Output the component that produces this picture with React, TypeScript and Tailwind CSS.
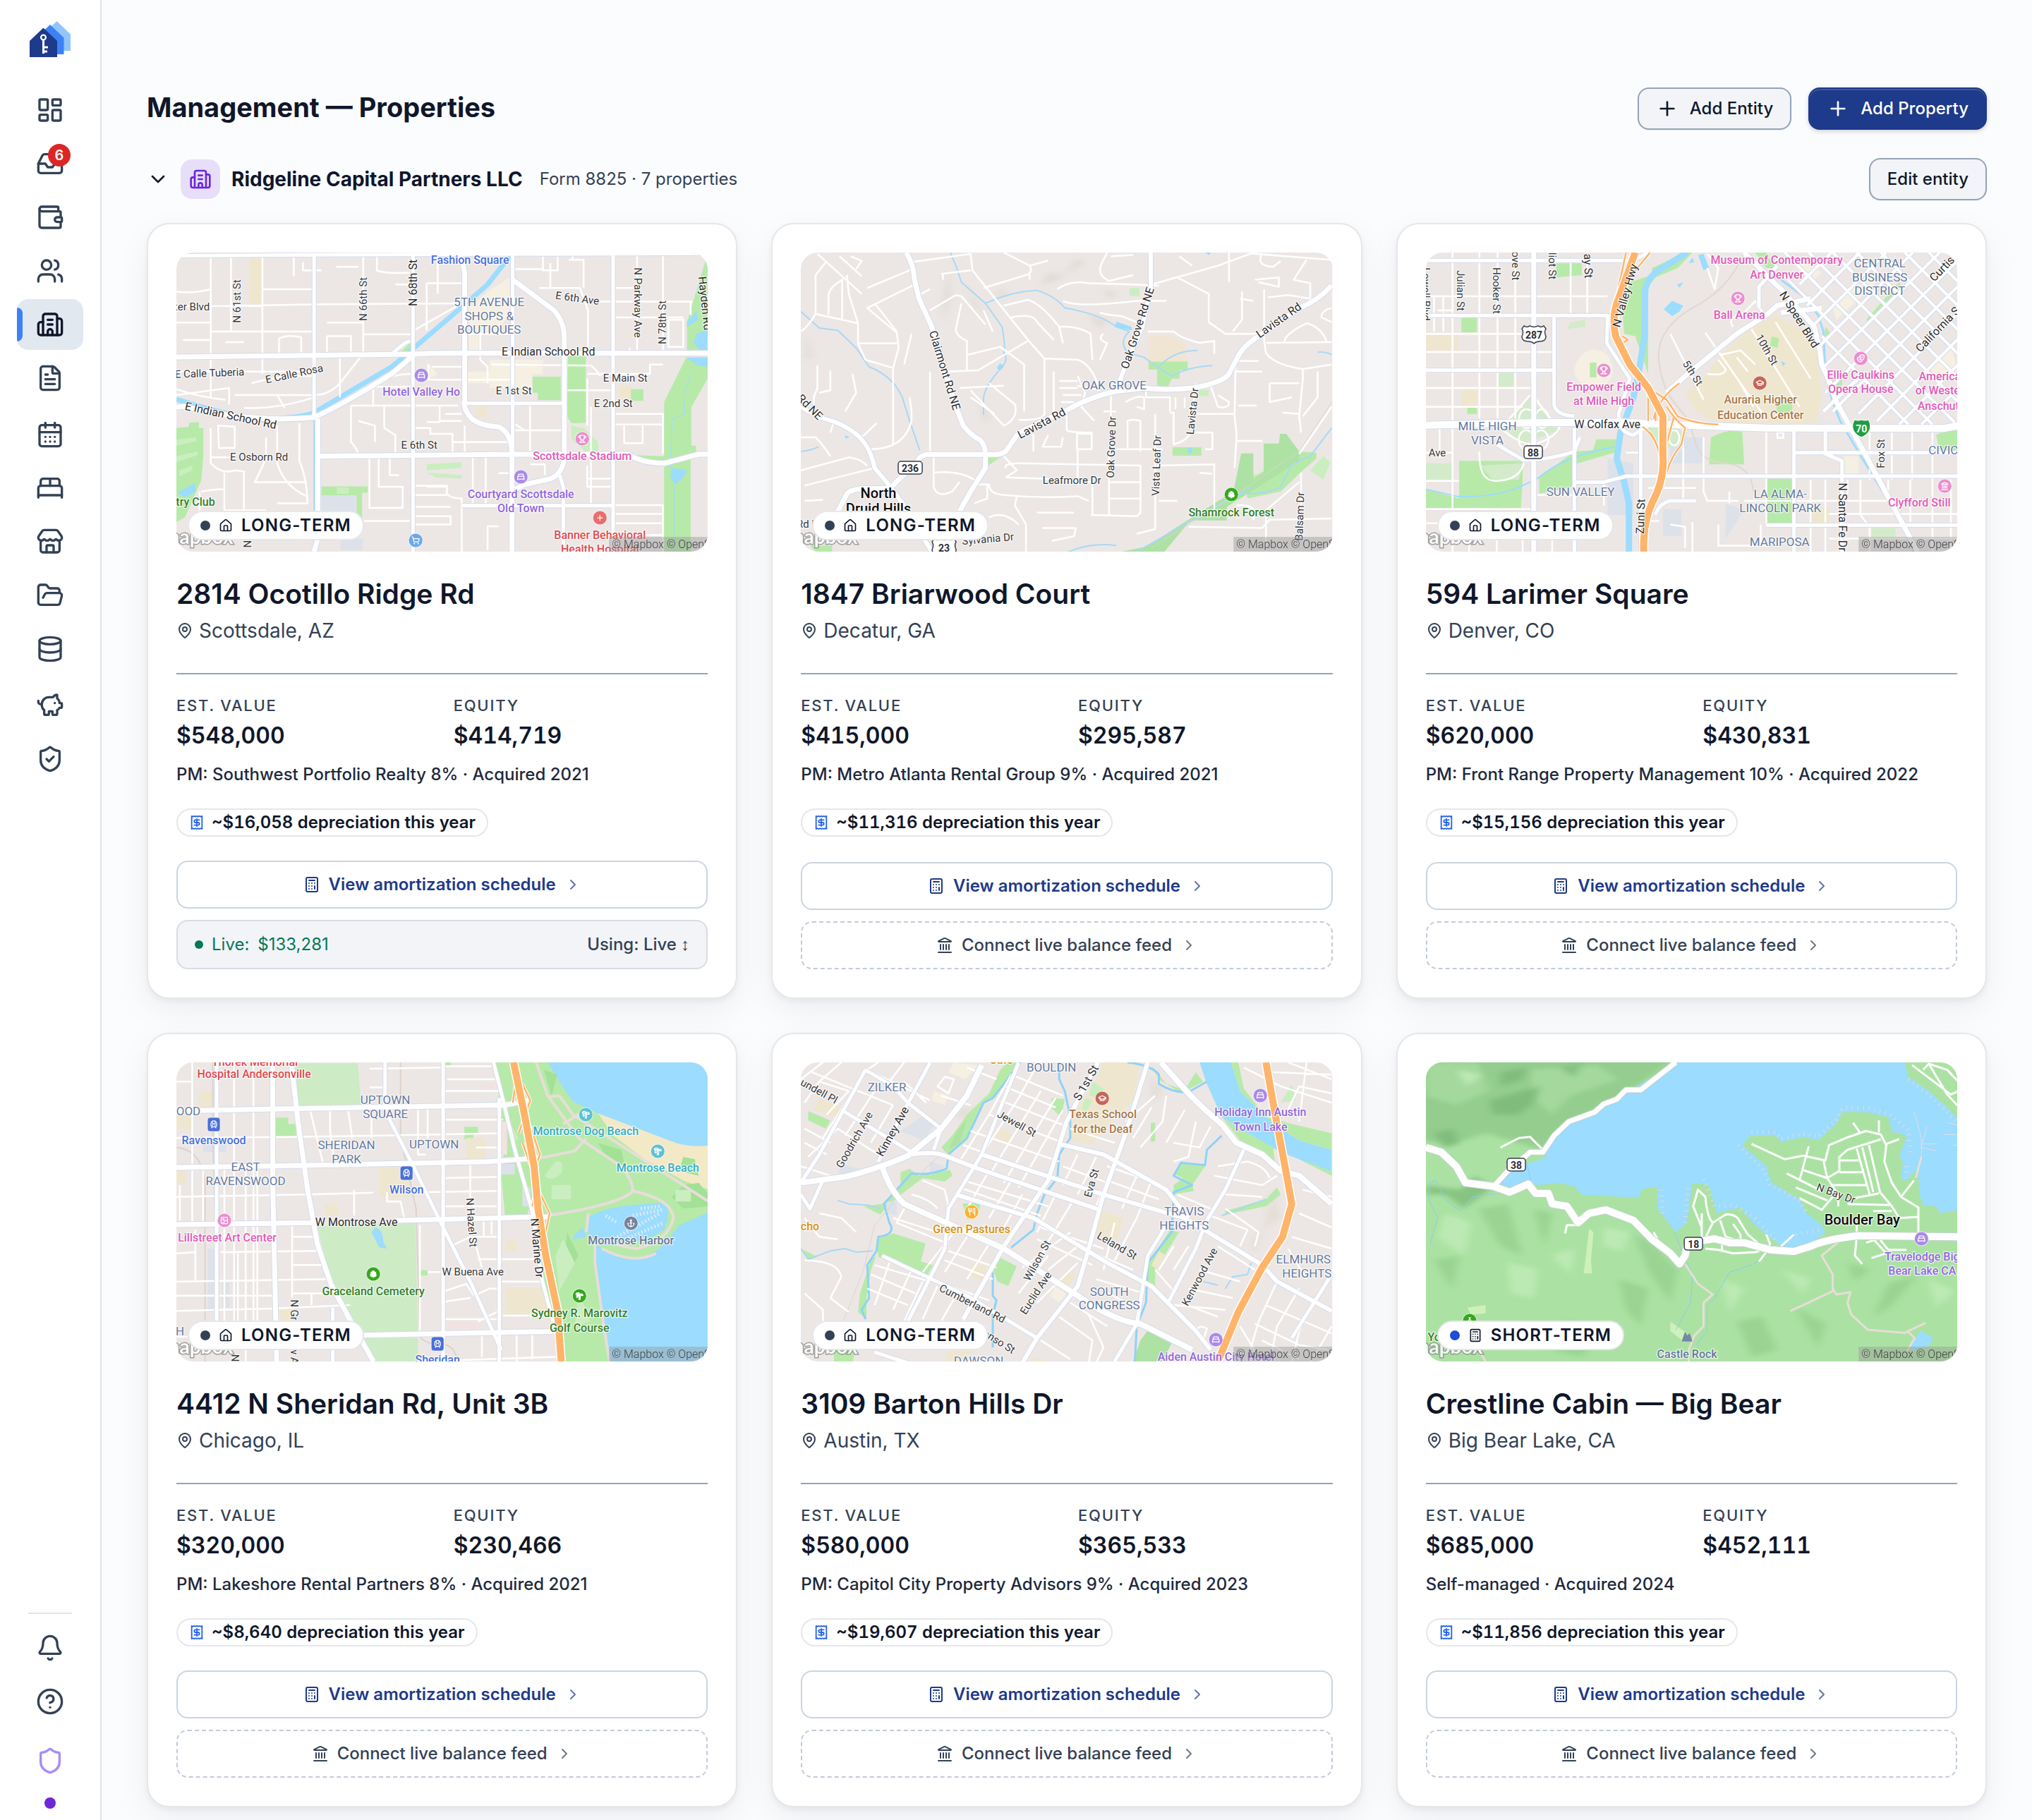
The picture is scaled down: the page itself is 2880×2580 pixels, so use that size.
import React from "react";
import {
  Anchor,
  BedDouble,
  BedSingle,
  Bell,
  Building2,
  Calculator,
  CalendarDays,
  ChevronDown,
  ChevronRight,
  CircleHelp,
  Database,
  Drama,
  FileText,
  FolderOpen,
  GraduationCap,
  House,
  Image,
  Inbox,
  Landmark,
  LayoutDashboard,
  MapPin,
  MountainSnow,
  PiggyBank,
  Plus,
  Receipt,
  Shield,
  ShieldCheck,
  ShoppingCart,
  Store,
  Tent,
  TrainFront,
  TreeDeciduous,
  TreePalm,
  Trophy,
  Users,
  Utensils,
  Wallet,
  type LucideIcon,
} from "lucide-react";

/* ---------- Map types ---------- */

type LabelKind =
  | "road"
  | "minor"
  | "district"
  | "town"
  | "purple"
  | "pink"
  | "green"
  | "red"
  | "blue"
  | "brown"
  | "teal"
  | "orange"
  | "slate";

// text, x, y, kind, rotation
type MapLabel = [string, number, number, LabelKind, number?];
// x, y, colour, icon, shape (circle by default)
type MapPoi = [number, number, string, LucideIcon, ("square" | "bare")?];
// text, x, y, kind
type MapShield = [string, number, number, "state" | "us" | "interstate"];
type Stroke = { d: string; w: number; color?: string; dash?: string };

interface MapData {
  origin: [number, number];
  stepX: number;
  base?: string;
  casing?: string;
  areas: { d: string; fill: string; opacity?: number }[];
  under: Stroke[];
  minor: string;
  minorWidth?: number;
  roads: Stroke[];
  highway?: string;
  ramps?: string;
  labels: MapLabel[];
  pois: MapPoi[];
  shields?: MapShield[];
}

const PARK = "#b7eaa9";
const PALE_PARK = "#cbeec0";
const WATER = "#9bdcff";
const SAND = "#efe6cf";
const CREAM = "#f5f0e2";
const CAMPUS = "#dde1ea";
const RAIL = "#ddd3cb";
const PATH = "#e8ddd8";
const PURPLE = "#ab8ae8";
const PINK = "#ea8fce";
const TRANSIT = "#4a6fd8";
const LEAF = "#36a81e";

const labelStyles: Record<LabelKind, { fill: string; size: number; weight: number }> = {
  road: { fill: "#2b2b2e", size: 16, weight: 400 },
  minor: { fill: "#38383b", size: 15, weight: 400 },
  district: { fill: "#66799f", size: 17, weight: 400 },
  town: { fill: "#0b0b0d", size: 20, weight: 500 },
  purple: { fill: "#9166e0", size: 16, weight: 500 },
  pink: { fill: "#e25bb8", size: 16, weight: 500 },
  green: { fill: "#34802a", size: 16, weight: 500 },
  red: { fill: "#e04a4f", size: 16, weight: 500 },
  blue: { fill: "#4671e0", size: 16, weight: 500 },
  brown: { fill: "#a6784a", size: 16, weight: 500 },
  teal: { fill: "#33aec4", size: 16, weight: 500 },
  orange: { fill: "#d8940e", size: 16, weight: 500 },
  slate: { fill: "#68789a", size: 16, weight: 500 },
};

/* ---------- Map data ---------- */

const scottsdale: MapData = {
  origin: [57, 84],
  stepX: 0.523,
  areas: [
    { fill: PARK, d: "M1492 110L1440 380V500H1500V84ZM1438 530H1500V610L1452 740V905H1465V950L1450 965V1360H1378V720ZM1118 525H1166V808L1128 810L1114 780ZM1022 612H1098V712H1036V680H1022ZM57 830L90 825L92 808L118 805V830H130V945L125 1050L80 1210L57 1230ZM450 1078H575V1105H560V1230H545V1118H450ZM1288 665H1322V715H1288ZM698 455L690 520L660 515ZM1240 942L1378 950V985L1320 970Z" },
    { fill: PALE_PARK, d: "M1126 820L1160 830L1200 890V930H1165L1128 880ZM57 880L110 870L112 885L57 905ZM57 950L115 930V945L57 975ZM65 1010L100 990V1010L65 1035ZM492 1083H524V1110H492ZM735 985L830 975V1000L735 1010ZM735 1020L830 1030V1045L760 1040Z" },
    { fill: CAMPUS, d: "M450 1116H543V1190H450ZM502 1300H562V1350H502Z" },
    { fill: SAND, d: "M255 108H290V305H255ZM1255 650H1288V705H1255ZM868 738H897V785H868Z" },
    { fill: CREAM, d: "M900 250L960 190V330L930 430H875V500H850V320ZM905 540H1050V600H1020V660H905V640H845V590H905ZM735 550L765 600L740 625Z" },
    { fill: WATER, d: "M1465 335L1440 380V400L1470 370ZM1498 410L1465 430L1458 470L1475 498H1498ZM1438 530H1498V570L1470 565ZM1400 1000L1440 1010L1430 1040L1410 1070L1395 1040ZM105 1065L60 1105L80 1125L110 1100Z" },
  ],
  under: [
    { w: 7, color: WATER, d: "M965 90L900 220L820 330L700 490L640 570L430 765Q400 785 290 795Q200 780 57 708" },
    { w: 5, color: WATER, d: "M433 790V1356" },
    { w: 1, color: WATER, d: "M1450 600L1430 700L1435 770L1400 790L1395 990L1405 1070V1356" },
  ],
  minor:
    "M57 312H150M150 100V700M150 420H430M57 382H150M75 456H152M290 95V520M290 240H430M150 312L430 305L840 300M205 100V420M375 100V185M400 125V160H450M490 145H550M563 95V515M465 382H560M563 432H698M465 440H530V520M465 440V520M600 100V160Q620 175 690 170M650 220H698M735 215V415M735 215H838M765 100V260M700 415L830 300M57 250Q100 260 150 240M335 520V450Q360 430 395 445V520M190 465H240M57 590H430M290 530V600M57 665Q120 700 190 710M57 690L200 660V730M215 690H430Q470 690 500 640L560 520M240 745Q330 750 430 700M260 640Q350 600 430 610M350 745L330 690M170 820L215 825V915H172ZM150 955H210M150 830V980Q180 1030 215 1010L240 1015V1180M300 870V960L270 1060H410M330 820V980Q350 1080 410 1120M390 810V970Q410 1040 412 1150H330M187 1020V1180H300M125 1100Q160 1090 187 1090M120 1100V1180M500 520V700M530 735V890Q560 940 540 960M550 800L595 820V890M590 735V640Q640 600 698 600M620 730V830L650 860V942M530 735H820M590 655H698M750 570H838M740 560V625H960M770 735V800H830M735 805H770V735M805 890H958M698 830H745V855H805V942M785 770H830M838 820V942M735 1080H790M698 1075H790V1110Q800 1130 830 1130V1356M605 950V1080H670V1170H580V950M635 950V1030H660M565 1225H690M700 1115H790M700 1165H800M700 1205H800V1240H700M900 1350V1248H930M930 1022H968M860 950V1150M895 950V1155M1015 985H1055V1030M1015 725V942M1058 725H1100M975 840H1100M1000 840L975 815M968 430H838M880 430V540L900 570V640M910 560L1180 565Q1200 590 1205 610M1110 670H1240M1170 620V820M1170 600H1240M1040 235H1150L1172 330V500M1205 293H1455M1070 130V235M1050 100V160H1090V100M1120 115H1160V235M1130 90V115M975 155H1050M1245 235H1305M1305 90V500M1375 90V500M1245 360H1430M1390 370H1430V485H1390ZM1450 295V350M1245 600H1340V560H1375M1245 770H1375V940M1245 815H1375M1270 820V895H1320V820M1285 490V520M1170 990V1080H1240M1170 1045H1240M1245 1158H1375V1356M1245 1195H1375M1245 1235H1375M1245 1285H1375M1180 740V1150",
  roads: [
    { w: 7, d: "M57 528L430 521L700 516Q740 512 800 512H1500M57 742L75 738Q260 810 430 785Q520 720 640 600L700 520M440 790V1300L430 1356M825 90Q840 160 838 200V740Q850 820 930 825Q965 850 966 940V1356M968 200L1080 330Q1108 380 1108 450V960Q1100 1040 1060 1050L1000 1070L975 1090M440 950L960 942L1280 942Q1320 980 1380 980L1470 942H1500" },
    { w: 5, d: "M430 95V785M57 98L430 94L800 92L1500 88M698 90V1356M968 90V940M1240 90V1356M830 1160H1240M830 725H1110M1095 1030L1105 1080V1356M640 515L675 470L690 460" },
  ],
  labels: [
    ["Fashion Square", 852, 118, "blue"],
    ["5TH AVENUE", 904, 295, "district"],
    ["SHOPS &", 904, 353, "district"],
    ["BOUTIQUES", 904, 412, "district"],
    ["ter Blvd", 100, 315, "minor"],
    ["N 61st St", 222, 290, "minor", -90],
    ["N 66th St", 564, 282, "minor", -90],
    ["N 68th St", 698, 212, "road", -90],
    ["E 6th Ave", 1143, 278, "minor", 8],
    ["N Parkway Ave", 1307, 298, "minor", 90],
    ["N 78th St", 1375, 380, "minor", -90],
    ["Hayden Rd", 1489, 300, "road", 84],
    ["E Indian School Rd", 1064, 506, "road"],
    ["E Calle Tuberia", 146, 596, "minor", -2],
    ["E Calle Rosa", 376, 600, "minor", -12],
    ["E Main St", 1274, 618, "minor"],
    ["Hotel Valley Ho", 720, 677, "purple"],
    ["E 1st St", 971, 671, "minor"],
    ["E 2nd St", 1240, 727, "minor"],
    ["E Indian School Rd", 205, 778, "road", 12],
    ["E 6th St", 715, 903, "minor"],
    ["E Osborn Rd", 281, 954, "minor"],
    ["Scottsdale Stadium", 1156, 948, "pink"],
    ["Courtyard Scottsdale", 990, 1110, "purple"],
    ["Old Town", 990, 1171, "purple"],
    ["try Club", 108, 1142, "green"],
    ["N", 250, 1322, "minor", -90],
    ["Banner Behavioral", 1204, 1284, "red"],
    ["Health Hospital", 1204, 1343, "red"],
  ],
  pois: [
    [720, 605, PURPLE, BedSingle],
    [1156, 876, PINK, Trophy],
    [990, 1038, PURPLE, BedSingle],
    [1204, 1212, "#e86d6d", Plus],
    [706, 1308, "#6ba9e8", ShoppingCart],
  ],
};

const decatur: MapData = {
  origin: [50, 84],
  stepX: 0.523,
  areas: [
    { fill: "#dcd6ce", opacity: 0.7, d: "M450 150L455 260L440 380L435 300ZM500 220L540 330L555 370L520 310ZM590 235L610 250L585 290ZM720 170L770 185L700 225ZM800 110L820 130L760 180ZM60 430L80 520L65 550ZM830 350L880 370L860 410ZM530 690L560 780L550 820ZM870 240L910 260L880 280ZM1250 1040L1330 1030L1240 1090Z" },
    { fill: "#efe5d2", d: "M992 438H1050L1090 470V500L1098 548V582H992Z" },
    { fill: PARK, d: "M992 548H1098V585H1076V620H1055L1044 658H1015V582H992ZM1057 912H1135V948H1057ZM556 955L600 945L558 990ZM1260 1130L1350 1100L1410 1010L1447 960V935L1400 930L1250 1060ZM75 1330H135V1356H90Z" },
    { fill: "#ade2a4", d: "M1243 938H1276V1050L1304 1020V896H1345L1348 855H1365L1400 930V970L1310 1060L1204 1165V1223H1105L1035 1356H918L985 1335L1110 1210L1222 1100Z" },
    { fill: PALE_PARK, d: "M1465 950L1485 975L1465 1050L1430 1010ZM940 235H967V268H940ZM1128 668H1155V695H1128Z" },
    { fill: WATER, d: "M905 378L945 400L948 415L900 400ZM590 555L600 570L590 585L580 575ZM1145 84H1162L1155 95ZM1098 915h12v20h-12ZM168 862L182 868L172 876Z" },
  ],
  under: [
    { w: 2, color: "#a9d8f5", d: "M455 84L470 140L485 210L550 300L595 400Q605 480 600 510Q615 540 590 580Q550 650 545 700V775M550 300Q620 250 690 245Q740 270 765 320Q860 345 905 400L940 420Q910 460 935 510L980 530L1015 570L1055 610Q1100 570 1165 565M1020 570Q1060 500 1125 500M50 335L100 405L150 415L200 490L235 570Q300 610 325 700L345 800L372 925M50 930Q80 925 98 910M1488 830L1430 950L1380 985L1350 1080Q1320 1110 1240 1110M1270 1080L960 1356M775 1356Q840 1315 905 1330M1450 508Q1470 505 1488 518" },
    { w: 1, color: RAIL, d: "M1488 720L1400 930L1250 1090L1000 1340" },
  ],
  minor:
    "M95 90L215 260M120 120L90 180V345L205 385V470L225 540L300 575V900M162 195V370M162 200Q130 230 125 260V350M90 345Q70 400 50 420M155 100L215 185M185 100L215 120L200 155M175 180L180 260L205 385M350 125L510 90L515 160L665 455L710 535V760Q715 800 640 795M365 215L230 320L310 425L315 490L300 575M230 235L360 150M205 470H310M250 300L310 420M400 330L470 265L485 270L550 390M370 265L400 240M485 300L470 410Q470 440 500 460V590M500 520L590 485L655 560V760M400 590V940M445 590L530 585L665 460M350 430L330 560M430 175L510 160M435 175V200M600 84L670 140Q680 170 660 180L545 235M670 140L720 118M670 178V200M600 310L665 285Q700 300 750 400L760 470M620 360Q680 340 690 380L735 455M750 400Q800 395 835 430L840 540M545 330L570 420M710 535L800 540Q840 560 860 670M735 590V760M510 670L600 820Q640 790 630 730L560 640M510 700L575 770M480 660L600 650M880 84L865 130Q850 180 885 205L950 180M890 100L950 95M745 240Q780 200 830 215L950 220L1020 225M760 290Q800 320 960 290H1040M860 340Q880 350 920 355L960 380M870 430Q850 450 880 470L860 540M990 420H1060Q1080 450 1130 468L1170 460V515M1000 220L1180 140L1270 88L1440 110L1488 115M1070 190L1155 260V380L1200 430H1300M1075 100L1110 140M1210 84V210M1300 90Q1280 140 1330 145L1350 120M1280 200L1345 190V230L1290 210M1245 250V370L1220 420M1240 280L1275 290M1305 240V460L1310 510Q1330 560 1410 580L1488 560M1420 115L1385 200L1430 215V280L1370 265L1315 275M1310 468L1488 465M1360 465Q1360 430 1420 385Q1460 400 1475 465M1488 320Q1460 330 1460 360L1488 380M1228 540L1225 780L1230 850V880L1225 1000M1230 545H1290M1230 590H1300M1120 640L1110 770H1222M1235 735H1285M1160 650L1180 740Q1210 750 1210 720L1180 690M1410 580V620L1400 780V800M1320 640H1400M1320 640V720L1380 700M1355 765L1400 770L1405 850M1450 590V700L1410 780M1230 885H1300M1400 940L1488 740M870 760H905M890 680V780M985 670V700H1050V760M930 720Q960 690 980 700V750L960 740M1065 700V750M1090 700V745M750 630H800M750 660H800M760 690H810M755 720H790M800 610L820 680L810 740L845 800M800 650L860 670M770 755V840Q780 850 840 850M798 855H838V920H798ZM800 920V1040M720 860L705 910H755L760 870M680 855V930M935 915V800Q950 790 970 800V930M885 950V1200M905 920H1030M605 1000Q600 980 640 980L970 990V1195M1010 770V1260L960 1280M1050 765H1060V900Q1100 880 1105 850H1165V920H1145M1015 990L1170 985V1190L1130 1195M885 1060H970M885 1130H970M835 1200L960 1205L970 1190M605 1040L700 1045L840 1060V1200M525 1070H560Q560 1110 600 1115Q700 1130 800 1120L830 1140M600 950L635 1010L605 1040M555 1070V1130L520 1150M635 1120L630 1160L660 1240V1356M690 1190H790M705 1255H795L790 1290L730 1310M410 950V1080Q420 1130 460 1100L480 1060M410 1020Q480 1010 520 1050M240 920Q330 920 350 800V760L345 700M250 1000L60 1075M50 1010L180 955Q210 960 230 990M50 870H90Q110 900 130 950M215 870L255 810M140 800L130 850M170 760L200 680L190 600M95 565V660L85 700V750M130 585V670L100 680M60 1140L110 1135M1020 1140H1070M1130 1020L1165 1025M1100 1250L1300 1255L1320 1220L1488 1215M1405 1020V1180M1400 1060L1310 1180L1310 1356M1230 1160Q1270 1150 1280 1190L1275 1220M560 1210Q600 1180 640 1240",
  roads: [
    { w: 7, d: "M335 84Q355 130 358 200L370 280L405 400L470 740L490 820Q510 860 535 880Q552 905 550 960V1000Q530 1050 510 1100L480 1185M1488 225Q1450 290 1400 320L1300 430Q1245 480 1230 540L1210 600Q1190 640 1110 660Q1040 672 980 660L900 675Q830 700 770 755L640 850L605 930Q590 945 570 943H390Q370 950 365 975L295 1080Q290 1088 240 1088Q190 1085 175 1110L150 1185" },
    { w: 6, d: "M998 84V230L975 400L930 560L905 670M50 740L100 785Q170 810 210 870Q240 920 250 1000L290 1075L325 1150L405 1356" },
  ],
  labels: [
    ["Clairmont Rd NE", 440, 585, "road", 73],
    ["Oak Grove Rd NE", 962, 405, "road", -72],
    ["Lavista Rd", 1345, 372, "road", -35],
    ["Lavista Rd", 702, 810, "road", -28],
    ["OAK GROVE", 898, 648, "district"],
    ["Lavista Dr", 1112, 760, "minor", -84],
    ["Oak Grove Dr", 892, 912, "minor", -88],
    ["Vista Leaf Dr", 1013, 990, "minor", -88],
    ["Leafmore Dr", 784, 1053, "minor"],
    ["Balsam Dr", 1402, 1205, "minor", -88],
    ["Rd NE", 74, 742, "road", 45],
    ["Rd N", 70, 1238, "minor"],
    ["North", 260, 1108, "town"],
    ["Druid Hills", 260, 1172, "town"],
    ["Sylvania Dr", 556, 1302, "minor", -5],
    ["Shamrock Forest", 1217, 1187, "green"],
  ],
  pois: [[1217, 1113, LEAF, TreeDeciduous]],
  shields: [
    ["236", 347, 999, "state"],
    ["23", 438, 1338, "us"],
  ],
};

const denver: MapData = {
  origin: [38, 84],
  stepX: 0.523,
  areas: [
    { fill: CAMPUS, d: "M530 960L600 980V1200H530ZM700 870H790V980H700ZM850 1150L900 1180L850 1300ZM680 1175H730V1290H680Z" },
    { fill: PARK, d: "M590 210L650 180V150L740 84H760L720 150L660 190L640 230V600L605 440L575 430L570 330ZM390 130H460V180L392 190ZM134 355H176V423H134ZM500 878H560V930L440 985L435 1080L345 1110V1040L440 930L490 925ZM128 970H300V1060L295 1170H38V1090L128 1130ZM810 870Q860 830 895 845L900 985H805ZM962 1045H1030V1235H962ZM1420 860L1470 820H1480V930H1430ZM930 84H960L985 150L960 150ZM1230 370L1320 210L1325 225L1240 380ZM1120 400L1135 430L1118 440ZM150 740H176V770H150ZM1140 620H1165V650H1140Z" },
    { fill: "#d3ebca", d: "M320 700L250 830L300 900L330 880L400 840ZM690 780L740 860L700 920L650 880L630 830ZM430 380L470 370V400L420 410ZM235 595H275V655H235ZM38 980H110V1050H38ZM185 990L300 980L290 1050L220 1050ZM1245 1255H1310V1295H1245Z" },
    { fill: SAND, d: "M915 410L985 350L1080 430L1100 520L1110 700L1095 810L830 805Q800 790 770 760L740 680L800 600L830 530ZM38 435H125V500H38ZM134 668H176V740H134ZM1080 1170H1130V1235H1080Z" },
    { fill: CREAM, d: "M490 495Q540 500 545 590Q540 650 490 665Q440 640 440 580Q450 510 490 495ZM1140 320L1230 180L1260 210L1150 370ZM1400 560L1460 480L1480 600L1420 640ZM1170 950H1210V1025H1170ZM1060 100L1110 170L1080 210L1040 150Z" },
    { fill: PARK, d: "M482 552H500V615H482ZM985 720L1030 700V765H990ZM975 440L995 450L990 490L970 480Z" },
    { fill: WATER, d: "M705 290L735 310L725 335L705 355L682 325ZM735 210L725 235L718 220ZM775 95L790 90L805 150L790 160ZM760 105L765 125L750 130ZM1000 545L1012 555L1005 568Z" },
  ],
  under: [
    { w: 9, color: WATER, d: "M745 84L690 140Q640 180 632 240L630 440L615 590L600 700L565 850L555 960L575 1060L588 1150V1356" },
    { w: 3, color: WATER, d: "M1000 200L1060 270L1100 350L1115 420L1120 600L1140 720L1160 800L1220 960L1330 1240L1360 1356" },
    { w: 2, color: WATER, d: "M38 1090L120 1120Q200 1130 280 1090L340 1045Q420 940 555 910" },
    { w: 2, color: "#e0d8d0", d: "M900 84Q860 240 760 320Q670 400 668 520Q670 620 700 700L750 800L770 900Q780 970 850 980Q920 990 925 1100" },
  ],
  minor:
    "M110 84V1170M183 84V790M232 84V790M280 84V800M475 130V350M430 120V350M38 270H530M38 430H330M38 507H380M38 660H330M38 740H300M60 270V420M85 270V420M110 330H70M310 750a20 40 0 1 0 1 0M352 750a18 40 0 1 0 1 0M310 840a20 40 0 1 1 -1 0M350 840a20 40 0 1 1 -1 0M320 690Q260 800 240 830Q290 900 330 900Q380 880 400 830Q360 770 330 690M710 840a14 32 0 1 0 1 0M700 430L790 710M795 425L890 640L925 740M920 410L1050 740M985 380L1080 620M835 520L890 500L930 560M880 530L910 590M800 600Q850 610 850 580L830 540M890 640L960 790M870 400Q850 360 900 340L930 290L950 340M960 840V1240M790 870V1100L800 1140H885M900 1140H1215M735 830V1140M640 1085H770M1240 840V1050M1300 840V1050M1355 840V1050M1410 840V1050M1080 1050V1356M1120 1050V1356M1215 1050V1200L1240 1250V1356M1290 1050V1140M1350 1050V1230M1410 1050V1356M1460 1050V1356M1035 1140H1330M1130 1195H1480M1130 1300H1480M860 1100V1150M580 935H620M38 1055H128M38 935H110M183 930Q180 1060 230 1055Q300 1050 305 960M75 830V960M340 1115H440M38 1235H330M300 1170V1356M380 1240V1356M110 1180V1356M155 1240V1356M230 1180V1356M520 1060V1160M520 1260H440M520 1190V1300M700 1240L740 1250V1340M640 1225H670M830 1240V1330H960M760 1230V1356M945 1240V1330M800 90L830 150L820 240L800 150M1180 1050V1110M990 850H1006V872H990ZM38 1175H330",
  roads: [
    { w: 4, d: "M1010 84L1470 806M1075 84L1480 720M1140 84L1480 618M1205 84L1480 516M1270 84L1480 414M1335 84L1480 312M1400 84L1480 210M1000 170L1410 815M1110 440L1345 815M1050 220L1136 84M1070 310L1213 84M1090 390L1285 84M1105 480L1357 84M1110 580L1430 84M1120 680L1480 115M1140 760L1480 226M1210 770L1480 340M1260 800L1480 450M1320 815L1480 560M1380 815L1480 660" },
    { w: 5, d: "M38 352H530L528 470L590 620L560 770Q560 850 600 860L640 820M385 360V730Q390 775 440 780M38 584H380M620 830V1356M440 1060H520L580 1035H1480M440 830V1356M230 900L300 965Q360 970 440 930L455 870M1120 840V940L1165 970V1356M1035 840V1356M1035 935H1480M960 1243H1480M660 1200Q670 1150 700 1140H770M1115 760L1160 690L1210 620M38 118H600L640 84M940 320V230L990 140" },
    { w: 7, d: "M330 84V1356M1080 280L990 310L960 350L880 430L740 610L690 680M900 84L960 180L1000 240L1090 400L1105 500L1110 560Q1130 620 1150 720L1210 890L1330 1240L1370 1356M1000 340L1110 320" },
    { w: 10, d: "M38 818L320 808L560 805L740 818L960 830L1200 832H1440L1480 820" },
  ],
  highway: "M605 84L560 280Q540 350 552 440L590 560L640 660L680 780V950Q685 1050 650 1150Q625 1240 628 1356",
  ramps:
    "M580 84L560 230L550 330M645 84L595 180L560 300M725 640Q670 700 655 790M630 650L690 710L720 780Q760 810 830 815M640 680V800M660 690V800M690 740Q710 790 740 830L730 900Q700 960 690 1020M625 825Q665 870 672 960M645 850Q670 900 675 990M710 780L690 900M570 440L585 455L560 480",
  labels: [
    ["Lowell Blvd", 38, 260, "minor", 90],
    ["Julian St", 132, 245, "minor", 90],
    ["Hooker St", 230, 245, "minor", 90],
    ["ove St", 280, 140, "minor", 90],
    ["liot St", 380, 140, "minor", 90],
    ["ay St", 478, 140, "road", 88],
    ["N Valley Hwy", 577, 268, "road", -74],
    ["Museum of Contemporary", 988, 118, "pink"],
    ["Art Denver", 988, 179, "pink"],
    ["CENTRAL", 1268, 130, "district"],
    ["BUSINESS", 1268, 189, "district"],
    ["DISTRICT", 1268, 247, "district"],
    ["Ball Arena", 886, 352, "pink"],
    ["N Speer Blvd", 1050, 370, "road", 58],
    ["Curtis", 1435, 152, "road", -46],
    ["California S", 1424, 412, "road", -46],
    ["10th St", 962, 497, "minor", 60],
    ["5th St", 760, 597, "minor", 57],
    ["Ellie Caulkins", 1215, 606, "pink"],
    ["Opera House", 1215, 667, "pink"],
    ["America", 1430, 612, "pink"],
    ["of Weste", 1425, 673, "pink"],
    ["Anschut", 1426, 735, "pink"],
    ["Empower Field", 519, 656, "pink"],
    ["at Mile High", 519, 717, "pink"],
    ["Auraria Higher", 944, 712, "brown"],
    ["Education Center", 944, 773, "brown"],
    ["W Colfax Ave", 530, 812, "road"],
    ["MILE HIGH", 205, 822, "district"],
    ["VISTA", 205, 881, "district"],
    ["Ave", 68, 936, "minor"],
    ["SUN VALLEY", 457, 1100, "district"],
    ["Zuni St", 620, 1205, "road", -88],
    ["LA ALMA-", 997, 1111, "district"],
    ["LINCOLN PARK", 997, 1169, "district"],
    ["MARIPOSA", 996, 1314, "district"],
    ["Fox St", 1272, 938, "minor", -90],
    ["N Santa Fe Dr", 1166, 1210, "road", 90],
    ["CIVIC", 1440, 925, "district"],
    ["Clyfford Still", 1374, 1147, "pink"],
  ],
  pois: [
    [884, 278, PINK, Trophy],
    [519, 584, PINK, Trophy],
    [1215, 533, PINK, Drama],
    [943, 638, "#c4665a", GraduationCap],
    [1443, 1076, PINK, Landmark],
  ],
  shields: [
    ["287", 330, 432, "us"],
    ["88", 328, 932, "state"],
    ["70", 1218, 832, "interstate"],
  ],
};

const chicago: MapData = {
  origin: [91, 78],
  stepX: 0.5485,
  areas: [
    { fill: WATER, d: "M1000 78H1466V1350H1100L1040 700Z" },
    { fill: PARK, d: "M915 78H1050L1080 160L1115 245L1180 295L1466 600V715L1390 770L1350 850Q1310 920 1260 905L1200 880L1172 850V930L1195 1200L1210 1350H1085L1040 1000L1010 730L940 560L925 250Z" },
    { fill: "#f3e9c6", d: "M1180 295L1380 420Q1420 440 1466 432V620L1400 580L1300 490L1220 390Z" },
    { fill: "#a3e196", d: "M1400 600L1440 590L1466 640V690L1400 700L1370 650ZM1040 110L1075 130L1060 220ZM1180 420L1240 450L1250 520L1200 480ZM1400 480L1430 490L1440 560L1390 540ZM1100 800L1130 900L1090 1000Z" },
    { fill: PALE_PARK, d: "M1070 500Q1095 490 1085 550Q1060 590 1042 560ZM1060 600H1110V660H1060ZM1090 830L1120 930L1080 1050L1070 900ZM1130 1050L1160 1180L1120 1200ZM935 290L975 400L960 420ZM1380 620H1420V670H1380Z" },
    { fill: WATER, d: "M1155 740Q1180 700 1270 685L1355 672Q1370 720 1350 790Q1300 850 1240 840L1200 860L1150 800ZM1140 780L1150 820L1115 830L1120 810Z" },
    { fill: "#cdebc5", d: "M455 775L708 760L715 1225H545L490 1010ZM568 1250H715V1350H600ZM395 82H560L568 262L400 268Z" },
    { fill: PARK, d: "M348 313H380V340H400V395H348ZM835 352H870V380H858V405H835ZM930 555H990L1000 730L940 735ZM947 1038H982V1093H947ZM780 78H800V95H780ZM720 962H740V985H720Z" },
    { fill: SAND, d: "M615 520H690L705 650H615ZM840 400H888V490H840ZM940 1035H1040L1055 1145L940 1150ZM475 680H507V730H475ZM360 1130H400V1180H360ZM91 305H130V360H91ZM91 530H115V595H91ZM940 835H970V885H940ZM150 200H185V270H150Z" },
    { fill: CAMPUS, d: "M160 420H220V460H160ZM172 870H190V1140H172ZM210 1015H228V1120H210ZM930 510H965V555H930ZM985 610H1005V690H985Z" },
    { fill: "#f2e3e3", d: "M925 330H945V470H925ZM785 1180H870V1222H785ZM885 165H920V190H885Z" },
    { fill: WATER, d: "M605 780Q625 790 625 840L635 870L615 865L595 800Z" },
  ],
  under: [
    { w: 2, color: RAIL, d: "M91 440Q160 450 165 600V1350M670 78V400L710 700L720 1240Q730 1280 790 1280Q815 1300 815 1350M185 78V400L200 1180" },
    { w: 4, color: PATH, d: "M1020 78L1050 220L1130 400L1240 520Q1270 580 1270 625Q1240 680 1055 728M1080 220L1115 300L1466 670M1050 225L1080 220M1270 625Q1370 660 1375 740Q1360 840 1280 870Q1240 860 1225 850M1150 400L1120 455L1030 485M1155 720L1150 800M1172 850V930L1195 1200L1210 1350M1190 870Q1270 940 1330 890M1130 300L1090 340" },
    { w: 5, color: "#dcebf2", dash: "2 3", d: "M1230 820L1340 720M1250 830L1350 760M1290 700L1340 690M1270 730L1345 705M1200 730L1230 760" },
  ],
  minor:
    "M132 78V780M160 530V770M240 78V1180M290 78V1180M437 285L470 510M488 285V370L500 510M535 285L545 400M270 530V1350M300 530V1180M215 530V1180M250 890V1180M550 620V730M595 285V400M635 630V670H670L680 745M590 105L780 100M590 185H630M715 270V470H735M740 270V400M785 95H905M790 150H915M785 200H925M785 322H935M91 400L410 395L600 390L930 380M865 440H925M850 500V660M785 570L925 565M735 630L925 625M785 690H925M91 650L430 640L600 632M91 890L140 885M205 885L460 880M390 820H450M390 940H470M91 1010L480 1000M390 1060H490M91 1135L340 1125L540 1110M91 1070H340M720 770V1220M740 970H925M800 860L850 820H925M870 915H1030M885 750V815M905 750V810M860 830L880 950M930 1010H1030M785 1050L840 1020L860 1070L900 1040H925M785 1095L850 1080M785 1170H930M870 1180L930 1130M935 1155H1060M390 760V1080M440 1060V1110M880 1240V1330M970 1230V1350M1010 1230V1340M720 1350L1070 1330M91 1245H130M140 790V1010M100 600V750M91 160H132",
  roads: [
    { w: 7, d: "M91 285L400 275L940 260L1000 240M91 525L560 512L900 500L1025 485M91 768L440 760M660 750L1050 735M340 78V600L350 1350M388 78L405 330L430 620L455 850L490 1020L545 1190L600 1350M575 1238L1070 1222" },
    { w: 5, d: "M910 78L935 240L965 450L1010 710L1035 1000L1070 1220M635 300L700 510L780 780L850 1010L930 1300M195 78V1180M780 78V1350M925 230V1350M630 78V290M495 1120V1350" },
  ],
  highway: "M962 78L990 300L1015 520L1025 700L1045 900L1075 1130L1085 1350",
  ramps:
    "M985 170L1005 240L975 380M1005 350L1030 470L1010 560M985 420L1015 560M1020 600L1055 720L1045 800M1010 690L1025 560M960 250L970 130M970 240L1000 300",
  labels: [
    ["Thorek Memorial", 293, 78, "red"],
    ["Hospital Andersonville", 292, 130, "red"],
    ["OOD", 122, 285, "district"],
    ["UPTOWN", 630, 237, "district"],
    ["SQUARE", 630, 296, "district"],
    ["Ravenswood", 188, 412, "blue"],
    ["SHERIDAN", 530, 430, "district"],
    ["PARK", 530, 489, "district"],
    ["UPTOWN", 757, 426, "district"],
    ["EAST", 270, 522, "district"],
    ["RAVENSWOOD", 270, 581, "district"],
    ["Wilson", 685, 622, "blue"],
    ["Lillstreet Art Center", 222, 822, "pink"],
    ["W Montrose Ave", 556, 756, "road"],
    ["N Hazel St", 853, 758, "minor", 86],
    ["N Marine Dr", 1022, 868, "road", 85],
    ["W Buena Ave", 856, 970, "minor"],
    ["Graceland Cemetery", 599, 1049, "green"],
    ["Montrose Dog Beach", 1148, 371, "teal"],
    ["Montrose Beach", 1335, 527, "teal"],
    ["Montrose Harbor", 1266, 833, "slate"],
    ["Sydney R. Marovitz", 1132, 1143, "green"],
    ["Golf Course", 1132, 1205, "green"],
    ["Sheridan", 765, 1340, "blue"],
    ["N Gr", 395, 1130, "minor", 90],
    ["w A", 395, 1322, "minor", 90],
    ["N", 245, 1334, "minor", -90],
    ["H", 100, 1222, "district"],
  ],
  pois: [
    [188, 341, TRANSIT, TrainFront, "square"],
    [685, 550, TRANSIT, TrainFront, "square"],
    [765, 1274, TRANSIT, TrainFront, "square"],
    [215, 750, PINK, Image],
    [599, 977, LEAF, TreeDeciduous],
    [1132, 1072, LEAF, TreePalm],
    [1148, 300, "#5cc2d4", TreePalm],
    [1334, 456, "#5cc2d4", TreePalm],
    [1266, 763, "#75839f", Anchor],
  ],
};

const austin: MapData = {
  origin: [50, 78],
  stepX: 0.523,
  areas: [
    { fill: "#e0d9cf", opacity: 0.7, d: "M1000 130L1030 200L1000 260ZM470 290L520 260L490 330ZM1330 620L1350 740L1300 790L1280 890L1270 850L1310 760Z" },
    { fill: WATER, d: "M1130 78H1215L1240 200L1330 340L1400 410L1488 450V560L1400 490L1350 460L1250 370L1190 310L1150 170Z" },
    { fill: PARK, d: "M1215 78H1235L1250 190L1310 310L1380 340L1488 380V450L1400 410L1330 340L1240 200ZM1190 310L1250 370L1330 440L1335 520L1300 470L1240 410ZM1400 490L1488 540V560ZM610 78H645L575 230L545 250L500 410L450 470L430 440L460 390L500 300L560 210L590 110ZM320 545L345 530L370 560L455 535L460 560L440 585L380 570L330 630L290 680L265 725L220 690L270 680L320 610ZM255 830L300 805L388 848L375 925L408 940L390 992L260 905ZM255 900L240 960L228 1080V1170L205 1140L210 1060L240 920ZM590 908L635 945L612 1028L582 1010L570 950ZM1080 505L1145 520L1110 600L1115 625L1060 640L1060 600L1085 570L1060 550ZM1050 790L1075 800L1010 960V1040L975 1010L990 940ZM730 230L765 235L755 310L728 270ZM70 285L130 325L118 360L70 325ZM1200 710L1310 660L1340 610L1350 640L1310 690L1200 725ZM140 1300H200L190 1350H140ZM50 870L95 905L70 920ZM998 335H1010V415H998ZM1120 120L1140 160L1080 210L1020 150L1000 90L1040 170L1090 195ZM488 678H535V700L520 745H500Z" },
    { fill: "#ade2a4", d: "M990 1218L1055 1270L1030 1350H950L970 1260ZM470 380L500 320L480 420L450 450Z" },
    { fill: SAND, d: "M868 78H970L950 240L890 330L840 425L780 415L790 290L850 150ZM100 230L160 270L140 310L85 280ZM595 360L622 385L608 425L570 395ZM865 710L925 740L905 835L850 805ZM515 935L555 945L545 1005L508 990ZM450 1305L520 1300L500 1350H440ZM1020 880L1040 900L1015 960L1000 940ZM770 965L795 990L775 1030L750 1005ZM680 1330L720 1350H670Z" },
    { fill: CREAM, d: "M465 78L530 90L495 150L450 120ZM740 1030L770 1060L750 1100L725 1070ZM410 200L450 220L440 260L405 240Z" },
    { fill: PALE_PARK, d: "M840 160L870 190L860 230L830 220ZM820 230L840 240L825 285L810 275ZM1380 170L1390 240L1350 250Z" },
    { fill: CAMPUS, d: "M385 300L420 330L380 410L320 370ZM280 670L310 670V730L285 720ZM400 500L440 520L400 560ZM160 510L210 530L150 560Z" },
  ],
  under: [
    { w: 3, color: "#8fd2f7", d: "M645 78L570 230L545 250L500 400L450 470L445 530Q400 560 350 550L275 680L290 760Q310 810 260 820L255 880L230 940L235 1080L215 1130L225 1170M750 78V150L765 200L780 310V400L750 470L745 570L710 640L690 720L680 790L620 865M1190 390L1150 450L1145 515L1080 505L1060 560L1110 600L1060 630L1055 800L990 930L985 1100L960 1200L955 1350M570 970V1070L580 1090L570 1150V1290M935 78Q1000 90 1020 130V170Q1060 210 1100 205L1150 160" },
    { w: 2, color: "#a9d8f5", d: "M50 870L70 915L130 880L170 870L200 885L245 880M150 665L180 680L230 685L265 700M1270 930L1260 980L1220 990L1200 1040M1140 1010L1180 1025M1310 660L1190 730" },
    { w: 1, color: RAIL, d: "M450 440L340 600L250 770L220 960L165 1180" },
  ],
  minor:
    "M490 430L560 470M510 370L750 500M560 300L760 420M590 240L770 350M600 180L740 270M620 130L760 220M480 500L560 300L620 130M520 520L640 230L690 90M560 560L700 200M600 590L740 230M640 610L760 280M490 580L720 690M480 610L700 730M560 540L500 700M620 580L560 740M650 640L600 780M780 360L900 420M760 520L880 590M750 570L860 640M800 470L760 600M850 480L800 640M900 500L850 690M960 560L920 700M1000 580L960 740M880 520L1030 600M880 580L1020 660M930 330L1010 220M900 760L870 960M960 740L900 920M740 640L690 800M790 660L720 840M700 780L870 870M690 830L840 940M830 880L950 960M650 950L780 800M720 960L800 860M640 1060L720 900M690 1100L800 930M560 850L500 1000M500 820L440 970M450 880L580 950M440 920L570 1000M380 970L470 790M420 1010L560 1090M300 740L420 800M330 700L310 760L450 850M350 640Q400 660 420 700M380 580L440 620L450 690M60 250L100 160L180 200L120 300M80 120L300 260M50 150L110 78M160 78L100 160M300 260L240 420M200 180L110 400M250 200L170 390M60 360L130 420M60 420L120 470M70 480L150 360L260 470M50 520L130 560M260 78L230 110L400 240M330 78L280 180M330 160L390 250M420 180L440 140L465 150L450 210ZM430 220L510 260M500 100L580 150M100 720L160 740L200 800M60 740L100 820L150 830M60 920Q150 920 160 990L130 1080L180 1140M60 1060L110 1130V1180M250 940L400 1010M240 980L360 1060M230 1040L340 1110M290 930L250 1110M350 960L300 1130M380 1010L330 1180M420 1030L380 1170M470 1070L430 1180M520 1090L490 1180M750 1160L840 1260L830 1356M780 1100L880 1200M830 1150L870 1290L850 1356M700 1260L780 1340M880 1060L960 1120M850 1000L980 1060M1010 960L1060 1050M1060 860L1020 960M1100 860L1060 960M1070 640L1160 700M1170 560L1300 600L1340 560M1180 520L1260 500Q1310 520 1320 570M1200 640L1300 650M1160 730L1260 790L1240 860M1200 700L1290 800L1280 860M1180 860L1280 960M1130 960L1240 1010M1100 1040L1220 1080M1080 1100L1180 1160M1120 1220Q1130 1190 1150 1210L1140 1260M1060 1110L1200 1130M1040 220L1030 330L970 440M1090 280L1040 420M1120 330L1100 480L1060 500M1000 270L950 400M1160 350L1130 440L1060 420M1250 100L1350 180L1488 250M1370 78L1488 150M1330 120L1488 130M1370 280L1400 180L1488 210M1420 78L1400 330M1410 620L1488 650M1400 720L1488 780M1380 820L1488 870M1370 870L1420 1000M1340 1010L1290 1180L1260 1340M1400 1040L1340 1200L1320 1356M1440 1080L1400 1220L1380 1356M1310 1110L1488 1230M1280 1190L1400 1280L1480 1300M1300 1260L1400 1340M1240 1200L1300 1356M1488 1200L1430 1356",
  roads: [
    { w: 5, d: "M640 80L540 470L450 700L440 870L340 1180M400 80L300 370L260 500M225 110L100 470L50 590M225 110L300 180L340 250L430 360L410 450M160 280L350 460M1250 450L1200 620L1150 750L1120 870L1045 1100M1040 770L990 900L960 1190L900 1350M270 900L500 1070L690 1250M50 640L75 700L110 580M1488 980L1380 1250M250 1310L340 1356" },
    { w: 6, d: "M350 470Q410 455 440 475L530 530L690 615L860 705M540 470L870 640L1090 740L1300 940L1340 1010L1488 1135M990 78L930 380L870 640L830 870L800 1030L690 1250L650 1356M470 640L680 740L880 930L1000 1030L1120 1220L1160 1300M750 425L870 470L1040 620L1100 740M855 78L770 330L720 580L600 860L490 1170" },
    { w: 8, d: "M50 590L170 565Q260 530 340 475L430 360L500 220L540 90M1025 78L1100 210Q1150 290 1190 340L1230 420L1300 470L1350 540L1400 560L1488 680M270 520Q290 620 330 680L600 870L800 1070Q900 1180 970 1190L1110 1300" },
  ],
  highway: "M1310 78L1335 300L1365 550L1380 680L1355 820L1300 950L1235 1140L1185 1330L1175 1356",
  labels: [
    ["Café", 593, 70, "orange"],
    ["ZILKER", 283, 182, "district"],
    ["BOULDIN", 728, 100, "district"],
    ["S 1st St", 822, 165, "road", -60],
    ["undell Pl", 100, 200, "minor", 29],
    ["Goodrich Ave", 196, 408, "minor", -60],
    ["Kinney Ave", 298, 373, "road", -61],
    ["Jewell St", 635, 338, "minor", 29],
    ["Texas School", 868, 301, "brown"],
    ["for the Deaf", 868, 362, "brown"],
    ["Holiday Inn Austin", 1295, 291, "purple"],
    ["Town Lake", 1295, 353, "purple"],
    ["Eva St", 838, 592, "minor", -74],
    ["TRAVIS", 1088, 711, "district"],
    ["HEIGHTS", 1088, 770, "district"],
    ["Green Pastures", 513, 786, "orange"],
    ["cho", 74, 775, "orange"],
    ["Leland St", 907, 858, "minor", 30],
    ["Wilson St", 690, 920, "minor", -61],
    ["Euclid Ave", 686, 1060, "minor", -57],
    ["Kenwood Ave", 1130, 990, "minor", -62],
    ["ELMHURS", 1412, 916, "district"],
    ["HEIGHTS", 1420, 974, "district"],
    ["SOUTH", 885, 1052, "district"],
    ["CONGRESS", 885, 1111, "district"],
    ["Cumberland Rd", 515, 1105, "minor", 27],
    ["Alonso St", 575, 1255, "minor", 32],
    ["DAWSON", 532, 1348, "district"],
    ["Aiden Austin City Hotel", 1175, 1330, "purple"],
  ],
  pois: [
    [867, 231, "#c4665a", GraduationCap],
    [1294, 218, PURPLE, BedSingle],
    [513, 714, "#f8b233", Utensils],
    [1174, 1258, PURPLE, BedSingle],
  ],
};

const bigBear: MapData = {
  origin: [38, 78],
  stepX: 0.523,
  base: "#abe2a3",
  casing: "#c5d3cf",
  areas: [
    { fill: "#8fc98a", opacity: 0.8, d: "M0 40H740L600 190L560 235L430 330L355 450L200 380L100 430L0 400Z" },
    { fill: "#a6da9f", opacity: 0.9, d: "M38 78H180L210 200L120 260L38 220ZM320 110L500 90L560 150L430 220L380 300L330 230Z" },
    { fill: "#78b674", opacity: 0.7, d: "M210 240L300 200L350 180L330 250L290 300L220 300ZM240 120L310 100L300 150L240 180ZM38 600L130 620L170 560L220 610L140 700L90 640L38 640ZM60 380L110 360L130 420L90 440ZM400 100L460 84L440 140Z" },
    { fill: "#93cd8c", opacity: 0.7, d: "M180 700L260 680L300 900L240 860ZM600 800L650 850L720 960L700 1100L640 960ZM560 1000L640 1040L620 1200L580 1130ZM880 1180L950 1160L990 1300L920 1330ZM1290 1020L1370 980L1300 1110L1250 1160ZM60 920L130 900L110 1040ZM420 1180L520 1220L460 1330L380 1300ZM330 700L380 720L360 860ZM1180 930L1240 960L1200 1010ZM1040 1120L1120 1190L1100 1290Z" },
    { fill: "#bfebb6", opacity: 0.9, d: "M90 720L160 760L140 900L70 820ZM520 780L590 800L570 880L520 860ZM260 930L340 960L330 1080L270 1060ZM840 1000L900 1040L860 1140ZM1000 960L1080 1000L1060 1060ZM1400 1000L1470 1050L1420 1120ZM120 110L190 130L150 180ZM380 900L440 870L430 980Z" },
    { fill: WATER, d: "M715 78H1335L1345 140L1400 200L1450 270L1480 320V705L1430 720L1420 690L1385 685L1375 640L1370 530L1340 580L1325 575L1330 500L1320 480L1340 390L1300 370L1290 310L1230 290L1165 290L1150 340L1100 410L1060 395L1000 418L985 388L915 392L895 430L960 520L975 590L1050 660L1070 720L1110 770L1120 800L1080 850L1010 870L985 840L930 770L890 695L825 718L805 600L760 590L745 760L715 800L665 700V608L625 615L615 650L570 650L460 640L440 605L400 590L345 600L320 590L270 610L230 590L260 540L365 480L355 450L430 330L500 290L600 190L700 90ZM1380 1218L1412 1250L1400 1285L1355 1300L1350 1280Z" },
    { fill: "#cff0bb", d: "M480 785L492 800L485 920L488 975L465 975L470 920ZM150 1120L200 1110V1145L160 1150ZM700 1180L745 1230L740 1270L700 1220Z" },
  ],
  under: [
    { w: 6, color: PATH, dash: "1 7", d: "M885 430L950 530L970 600L1045 660L1075 725M920 375L985 375L1000 405L1060 380L1100 395L1150 320L1165 275L1230 270L1295 300L1345 365L1350 480M740 760L748 600M790 575L820 690L870 685L930 740L985 830M675 620L680 720M1345 150L1395 210L1445 280L1475 330M1040 810L1110 790M1340 520V570" },
    { w: 1, color: PATH, d: "M1360 285L1380 400V480M1395 350L1380 440M1385 425H1425M1380 440L1420 455M1450 335L1480 345M1440 385H1480M1465 430H1480" },
    { w: 1, color: "#8ccdea", d: "M265 630L165 650L130 710L90 660L65 580L50 590L45 660L70 740L50 850M970 885L920 940L860 970L820 1080L800 1110V1220L770 1280M710 800L760 980L755 1100L715 1215M310 500L322 580" },
    { w: 3, color: PATH, d: "M740 935L775 1020L815 1065L790 1100V1200L765 1240L750 1300V1350M1165 830L1110 900L1140 980V1050L1060 1110L1025 1135M1140 1040L1150 1065L1188 1055L1180 1100L1190 1150L1235 1215L1335 1228L1392 1185M1345 1225L1362 1250L1340 1310M1380 480L1365 570M180 1300L200 1350" },
  ],
  minor:
    "M240 440L290 400L320 395L355 450M920 425L1010 490L1060 475L1120 495L1130 430L1175 400L1230 370L1270 385L1285 430L1280 500L1300 590L1325 650L1372 695V800M1075 435L1050 580M1270 405L1180 450L1158 480V540L1125 570L1115 495M1058 535L1125 570M1158 495H1210M1158 545H1220M1140 600H1230M1015 550L1110 625M1040 610L1125 665M1050 655L1110 705L1140 650M1125 570L1155 640V690M1205 445L1240 640M1220 440L1250 630M1238 430L1268 630L1300 690L1320 740M1180 680L1295 685M1200 655L1265 635M1195 335L1215 380M1265 325V375M1285 425L1320 405M1320 740L1372 735M1205 770V820L1200 900L1220 935M1325 650L1360 580M785 780L762 690L775 620L795 650Q800 740 815 760L850 725Q880 720 890 760L910 810L955 870M815 760L790 840M835 750L850 820L890 840V810L870 765M795 870L830 875L870 890L930 885L960 870M840 850V875M960 810L970 850L960 885L940 925M1000 860L1035 810M1250 830L1285 890M1265 825L1290 875M1230 845L1260 830M1245 910L1285 890M450 770H420L415 805M655 800L665 830M785 720V830M1355 90L1460 215L1480 200M1385 110L1400 84L1450 110L1480 160M1400 84L1450 215L1480 265M1250 710H1300M1290 875H1340",
  minorWidth: 3,
  roads: [
    { w: 7, d: "M715 78L620 195L580 195L555 235L520 255L495 290L425 330L385 390L355 460H320L260 540L225 600" },
    { w: 10, d: "M38 440L80 460L120 520L145 590L220 605L265 630L315 595L335 635L370 635L380 680L420 690L450 760L480 720L525 705L600 750L650 830L700 890L725 935L740 900L745 860L790 835L820 828L860 845L900 845L970 875L1035 882L1080 860Q1120 830 1210 815L1480 820" },
  ],
  labels: [
    ["N Bay Dr", 1148, 635, "minor", 20],
    ["Boulder Bay", 1219, 747, "town"],
    ["Travelodge Big", 1382, 902, "purple"],
    ["Bear Lake CA", 1382, 964, "purple"],
    ["Castle Rock", 745, 1318, "slate"],
    ["You", 68, 1246, "green"],
  ],
  pois: [
    [1381, 829, PURPLE, BedSingle],
    [157, 1175, LEAF, Tent],
    [745, 1245, "#7489a8", MountainSnow, "bare"],
  ],
  shields: [
    ["38", 282, 513, "state"],
    ["18", 763, 848, "state"],
  ],
};

/* ---------- Map drawing ---------- */

const PropertyMap: React.FC<{ map: MapData; title: string }> = ({ map, title }) => {
  const [originX, originY] = map.origin;
  const px = (x: number) => Math.round((x - originX) * map.stepX);
  const py = (y: number) => Math.round((y - originY) / 3);
  const casing = map.casing ?? "#d5dcec";

  return (
    <svg
      viewBox="0 0 753 424"
      preserveAspectRatio="xMidYMid slice"
      className="block h-full w-full"
      role="img"
      aria-label={title}
    >
      <rect width="753" height="424" fill={map.base ?? "#ece7e5"} />
      <g
        transform={`scale(${map.stepX} 0.33333) translate(${-originX} ${-originY})`}
        fill="none"
        strokeLinejoin="round"
      >
        {/* translucent areas are hill shading, so they get soft edges */}
        {map.areas.map((a, i) => (
          <path key={i} d={a.d} fill={a.fill} opacity={a.opacity} className={a.opacity ? "blur-[10px]" : undefined} />
        ))}
        {map.under.map((s, i) => (
          <path key={i} d={s.d} stroke={s.color} strokeWidth={s.w} strokeDasharray={s.dash} vectorEffect="non-scaling-stroke" />
        ))}
        <path d={map.minor} stroke="#fff" strokeWidth={map.minorWidth ?? 2.5} vectorEffect="non-scaling-stroke" />
        {map.roads.map((s, i) => (
          <path key={i} d={s.d} stroke={casing} strokeWidth={s.w + 2} vectorEffect="non-scaling-stroke" />
        ))}
        {map.roads.map((s, i) => (
          <path key={i} d={s.d} stroke="#fff" strokeWidth={s.w} vectorEffect="non-scaling-stroke" />
        ))}
        {map.ramps && (
          <>
            <path d={map.ramps} stroke="#fff" strokeWidth={4.5} vectorEffect="non-scaling-stroke" />
            <path d={map.ramps} stroke="#ffb469" strokeWidth={2.5} vectorEffect="non-scaling-stroke" />
          </>
        )}
        {map.highway && (
          <>
            <path d={map.highway} stroke="#fff" strokeWidth={13} vectorEffect="non-scaling-stroke" />
            <path d={map.highway} stroke="#ffb469" strokeWidth={10} vectorEffect="non-scaling-stroke" />
          </>
        )}
      </g>

      <g fontFamily="Roboto, sans-serif" textAnchor="middle">
        {map.labels.map(([text, x, y, kind, angle], i) => {
          const s = labelStyles[kind];
          return (
            <text
              key={i}
              transform={`translate(${px(x)} ${py(y)}) rotate(${angle ?? 0})`}
              dominantBaseline="central"
              fontSize={s.size}
              fontWeight={s.weight}
              fill={s.fill}
              stroke="#fff"
              strokeOpacity={0.75}
              strokeWidth={2.5}
              strokeLinejoin="round"
              paintOrder="stroke"
            >
              {text}
            </text>
          );
        })}
      </g>

      {map.pois.map(([x, y, color, Icon, shape], i) => (
        <g key={i} transform={`translate(${px(x)} ${py(y)})`} color="#fff">
          {shape === "square" && (
            <rect x="-9" y="-10" width="18" height="20" rx="4" fill={color} stroke="#fff" strokeOpacity="0.7" />
          )}
          {!shape && <circle r="10" fill={color} stroke="#fff" strokeOpacity="0.7" />}
          {shape === "bare" ? (
            <Icon x={-8} y={-8} width={16} height={16} color={color} fill={color} strokeWidth={2} />
          ) : (
            <Icon x={-6} y={-6} width={12} height={12} strokeWidth={2.5} fill={color === LEAF ? "#fff" : "none"} />
          )}
        </g>
      ))}

      <g fontFamily="Roboto, sans-serif" fontSize="14" fontWeight="700" textAnchor="middle">
        {map.shields?.map(([text, x, y, kind]) => (
          <g key={text} transform={`translate(${px(x)} ${py(y)})`}>
            {kind === "state" && (
              <rect
                x={text.length > 2 ? -17 : -13}
                y="-9"
                width={text.length > 2 ? 34 : 26}
                height="18"
                rx="4"
                fill="#fff"
                stroke="#3a3f4c"
                strokeWidth="1.5"
              />
            )}
            {kind === "us" && (
              <path
                d="M-14 -12Q-10 -9 -6 -12Q0 -9 6 -12Q10 -9 14 -12L17 -8Q14 -3 17 3Q17 10 8 10Q3 10 0 13Q-3 10 -8 10Q-17 10 -17 3Q-14 -3 -17 -8Z"
                fill="#fff"
                stroke="#3a3f4c"
                strokeWidth="1.5"
              />
            )}
            {kind === "interstate" && (
              <path
                d="M-10 -12Q-5 -10 0 -12Q5 -10 10 -12L12 -7Q15 6 0 13Q-15 6 -12 -7Z"
                fill="#1f9e43"
                stroke="#fff"
                strokeWidth="1"
              />
            )}
            <text dominantBaseline="central" y="1" fill={kind === "interstate" ? "#fff" : "#2b2f3a"}>
              {text}
            </text>
          </g>
        ))}
      </g>

      <text
        x="-19"
        y="413"
        fontFamily="Lato, sans-serif"
        fontSize="28"
        fontWeight="700"
        fill="#fff"
        stroke="#8e8e8e"
        strokeWidth="3"
        paintOrder="stroke"
        opacity="0.8"
      >
        mapbox
      </text>
      <rect x="613" y="403" width="140" height="21" fill="#9a9a9a" opacity="0.45" />
      <text x="617" y="419" fontFamily="Roboto, sans-serif" fontSize="16" fontWeight="300" fill="#2c2c2c" opacity="0.85">
        © Mapbox © OpenStreetMap
      </text>
    </svg>
  );
};

/* ---------- Properties ---------- */

interface Property {
  name: string;
  city: string;
  value: string;
  equity: string;
  details: string;
  depreciation: string;
  term: "Long-term" | "Short-term";
  liveBalance?: string;
  map: MapData;
}

const properties: Property[] = [
  {
    name: "2814 Ocotillo Ridge Rd",
    city: "Scottsdale, AZ",
    value: "$548,000",
    equity: "$414,719",
    details: "PM: Southwest Portfolio Realty 8% · Acquired 2021",
    depreciation: "~$16,058 depreciation this year",
    term: "Long-term",
    liveBalance: "$133,281",
    map: scottsdale,
  },
  {
    name: "1847 Briarwood Court",
    city: "Decatur, GA",
    value: "$415,000",
    equity: "$295,587",
    details: "PM: Metro Atlanta Rental Group 9% · Acquired 2021",
    depreciation: "~$11,316 depreciation this year",
    term: "Long-term",
    map: decatur,
  },
  {
    name: "594 Larimer Square",
    city: "Denver, CO",
    value: "$620,000",
    equity: "$430,831",
    details: "PM: Front Range Property Management 10% · Acquired 2022",
    depreciation: "~$15,156 depreciation this year",
    term: "Long-term",
    map: denver,
  },
  {
    name: "4412 N Sheridan Rd, Unit 3B",
    city: "Chicago, IL",
    value: "$320,000",
    equity: "$230,466",
    details: "PM: Lakeshore Rental Partners 8% · Acquired 2021",
    depreciation: "~$8,640 depreciation this year",
    term: "Long-term",
    map: chicago,
  },
  {
    name: "3109 Barton Hills Dr",
    city: "Austin, TX",
    value: "$580,000",
    equity: "$365,533",
    details: "PM: Capitol City Property Advisors 9% · Acquired 2023",
    depreciation: "~$19,607 depreciation this year",
    term: "Long-term",
    map: austin,
  },
  {
    name: "Crestline Cabin — Big Bear",
    city: "Big Bear Lake, CA",
    value: "$685,000",
    equity: "$452,111",
    details: "Self-managed · Acquired 2024",
    depreciation: "~$11,856 depreciation this year",
    term: "Short-term",
    map: bigBear,
  },
];

const PropertyCard: React.FC<{ property: Property }> = ({ property }) => {
  const isLong = property.term === "Long-term";
  const TermIcon = isLong ? House : Calculator;

  return (
    <article className="flex flex-col rounded-[32px] border-2 border-[#e6e7ea] bg-white p-10 shadow-[0_4px_8px_rgba(15,23,42,0.05),0_16px_48px_rgba(15,23,42,0.06)]">
      <div className="relative h-[424px] overflow-hidden rounded-3xl">
        <PropertyMap map={property.map} title={`Map of ${property.name}`} />
        <span className="absolute bottom-4 left-4 flex h-[42px] items-center gap-3 rounded-full border-2 border-[#e6e7ea] bg-white px-4 text-2xl font-semibold uppercase tracking-wider text-slate-900">
          <span className={`size-[14px] rounded-full ${isLong ? "bg-[#334155]" : "bg-[#1d4ed8]"}`} />
          <TermIcon className="size-5" />
          {property.term}
        </span>
      </div>

      <h2 className="mt-9 text-[39px] leading-[48px] font-semibold text-slate-900">{property.name}</h2>
      <p className="mt-2 flex items-center gap-2 text-[28px] leading-10 text-[#334155]">
        <MapPin className="size-6" />
        {property.city}
      </p>

      <dl className="mt-10 grid grid-cols-2 gap-8 border-t-2 border-[#94a3b8] pt-7">
        <div>
          <dt className="text-[22px] leading-8 font-medium tracking-[0.08em] text-[#334155]">EST. VALUE</dt>
          <dd className="mt-1 text-[32px] leading-[46px] font-semibold tabular-nums text-slate-900">{property.value}</dd>
        </div>
        <div>
          <dt className="text-[22px] leading-8 font-medium tracking-[0.08em] text-[#334155]">EQUITY</dt>
          <dd className="mt-1 text-[32px] leading-[46px] font-semibold tabular-nums text-slate-900">{property.equity}</dd>
        </div>
      </dl>
      <p className="mt-[14px] text-2xl leading-9 font-medium text-slate-800">{property.details}</p>

      <div className="mt-[30px] mb-[34px] flex">
        <span className="flex h-10 items-center gap-[10px] rounded-full border-2 border-[#e6e7ea] px-4 text-2xl font-semibold tabular-nums text-slate-900">
          <Receipt className="size-[22px] text-[#2563eb]" />
          {property.depreciation}
        </span>
      </div>

      <div className="mt-auto flex flex-col gap-4">
        <button
          type="button"
          className="flex h-[68px] items-center justify-center gap-3 rounded-2xl border-2 border-slate-300 text-2xl font-semibold text-[#1e3a8a]"
        >
          <Calculator className="size-6" />
          View amortization schedule
          <ChevronRight className="size-6 opacity-70" />
        </button>
        {property.liveBalance ? (
          <div className="flex h-[70px] items-center justify-between rounded-2xl border-2 border-[#d9dce3] bg-[#f2f4f8] px-6 text-2xl">
            <p className="flex items-center gap-3 text-[#047857]">
              <span className="size-3 rounded-full bg-[#047857]" />
              Live: <span>{property.liveBalance}</span>
            </p>
            <button type="button" className="font-medium text-[#334155]">
              Using: Live <span className="font-['Liberation_Sans',sans-serif] font-normal">↕</span>
            </button>
          </div>
        ) : (
          <button
            type="button"
            className="flex h-[68px] items-center justify-center gap-3 rounded-2xl border-2 border-dashed border-[#c2cad9] text-2xl font-medium text-[#334155]"
          >
            <Landmark className="size-6" />
            Connect live balance feed
            <ChevronRight className="size-6 opacity-70" />
          </button>
        )}
      </div>
    </article>
  );
};

/* ---------- Sidebar ---------- */

interface NavItem {
  label: string;
  icon: LucideIcon;
  active?: boolean;
  badge?: number;
}

const navGroups: NavItem[][] = [
  [
    { label: "Dashboard", icon: LayoutDashboard },
    { label: "Inbox", icon: Inbox, badge: 6 },
    { label: "Wallet", icon: Wallet },
    { label: "Tenants", icon: Users },
    { label: "Properties", icon: Building2, active: true },
    { label: "Documents", icon: FileText },
  ],
  [
    { label: "Calendar", icon: CalendarDays },
    { label: "Stays", icon: BedDouble },
    { label: "Marketplace", icon: Store },
    { label: "Files", icon: FolderOpen },
    { label: "Data", icon: Database },
  ],
  [
    { label: "Savings", icon: PiggyBank },
    { label: "Compliance", icon: ShieldCheck },
  ],
];

const Logo: React.FC = () => (
  <svg viewBox="0 0 58 52" className="h-[52px] w-[58px]" aria-hidden="true">
    <path d="M19 18.5L38.5 0L58 18.5V42H19Z" fill="#93c5fd" />
    <path d="M9.5 23.5L29 5L48.5 23.5V47H9.5Z" fill="#3b82f6" />
    <path d="M0 28L19.5 9.5L39 28V51H0Z" fill="#1e3a8a" />
    <circle cx="19.5" cy="23" r="3.4" fill="none" stroke="#fff" strokeWidth="2.4" />
    <path d="M19.5 26.5V46M19.5 37H26M19.5 43H25" stroke="#fff" strokeWidth="3" fill="none" />
  </svg>
);

const NavLink: React.FC<{ item: NavItem }> = ({ item }) => {
  const Icon = item.icon;
  return (
    <a
      href="#"
      aria-label={item.label}
      className={`relative flex h-[72px] items-center justify-center overflow-hidden rounded-2xl ${
        item.active ? "bg-slate-200 text-slate-900" : "text-[#334155]"
      }`}
    >
      {item.active && <span className="absolute left-0 h-12 w-2 rounded-r-lg bg-[#3b82f6]" />}
      <Icon className="size-10" />
      {item.badge && (
        <span className="absolute top-2 right-[18px] flex size-8 items-center justify-center rounded-full bg-[#dc2626] text-xl font-semibold text-white">
          {item.badge}
        </span>
      )}
    </a>
  );
};

const Sidebar: React.FC = () => (
  <aside className="flex w-36 shrink-0 flex-col border-r-2 border-[#e2e3e6] bg-white px-6">
    <a href="#" aria-label="Home" className="flex h-[120px] justify-center pt-[30px]">
      <Logo />
    </a>
    <nav className="flex flex-col gap-2">
      {navGroups.map((group, i) => (
        <div key={i} className="flex flex-col gap-1">
          {group.map((item) => (
            <NavLink key={item.label} item={item} />
          ))}
        </div>
      ))}
    </nav>
    <div className="mt-auto flex flex-col gap-1 pb-4">
      <hr className="mx-4 mb-2 border-t-2 border-[#e2e3e6]" />
      <NavLink item={{ label: "Notifications", icon: Bell }} />
      <NavLink item={{ label: "Help", icon: CircleHelp }} />
      <a href="#" aria-label="Security" className="mt-2 flex h-[72px] items-center justify-center text-[#a78bfa]">
        <Shield className="size-10" />
      </a>
      <span className="mx-auto mt-3 size-4 rounded-full bg-[#6d28d9]" />
    </div>
  </aside>
);

const secondaryButton =
  "flex h-[60px] items-center gap-4 rounded-2xl border-2 border-[#94a3b8] bg-[#f2f4f8] px-6 text-2xl font-medium text-slate-900 shadow-xs";

const App: React.FC = () => {
  return (
    <div className="flex min-h-screen bg-[#fbfcfe] font-[Inter,sans-serif]">
      <Sidebar />
      <main className="min-w-0 flex-1 overflow-hidden px-16 pt-[124px] pb-4">
        <header className="flex items-start justify-between">
          <h1 className="text-[38px] leading-[56px] font-bold text-slate-900">Management — Properties</h1>
          <div className="flex gap-6">
            <button type="button" className={secondaryButton}>
              <Plus className="size-8" />
              Add Entity
            </button>
            <button
              type="button"
              className="flex h-[60px] items-center gap-4 rounded-2xl border-2 border-[#1e3a8a] bg-[#1e3a8a] px-6 text-2xl font-medium text-white shadow-[inset_0_2px_0_rgba(255,255,255,0.15),0_2px_6px_rgba(15,23,42,0.2)]"
            >
              <Plus className="size-8" />
              Add Property
            </button>
          </div>
        </header>

        <section className="mt-10">
          <div className="flex items-center justify-between">
            <div className="flex items-center gap-4">
              <button type="button" aria-label="Collapse entity" className="text-slate-900">
                <ChevronDown className="size-8" />
              </button>
              <span className="flex size-14 items-center justify-center rounded-2xl bg-[#e7defa] text-[#6d28d9]">
                <Building2 className="size-8" />
              </span>
              <h2 className="text-[28px] leading-10 font-bold text-slate-900">Ridgeline Capital Partners LLC</h2>
              <span className="ml-2 text-2xl text-[#334155]">Form 8825 · 7 properties</span>
            </div>
            <button type="button" className={secondaryButton}>
              Edit entity
            </button>
          </div>

          <div className="mt-8 grid grid-cols-3 gap-12">
            {properties.map((property) => (
              <PropertyCard key={property.name} property={property} />
            ))}
          </div>
        </section>
      </main>
    </div>
  );
};

export default App;
